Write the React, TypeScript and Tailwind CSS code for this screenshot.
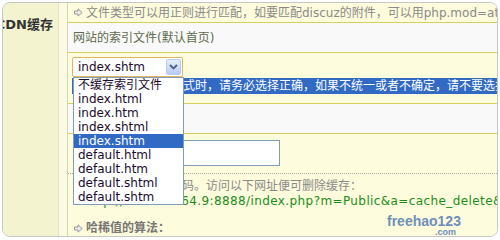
const FONT = "font-['DejaVu_Sans','Noto_Sans_CJK_SC',sans-serif]";

function Arrow() {
  return (
    <svg width="9" height="9" viewBox="0 0 9 9" className="shrink-0">
      <path
        d="M0.5 3h3.5V0.9L8.2 4.5 4 8.1V6H0.5z"
        fill="#ececec"
        stroke="#9a9a9a"
        strokeWidth="1"
      />
    </svg>
  );
}

const OPTIONS = [
  "不缓存索引文件",
  "index.html",
  "index.htm",
  "index.shtml",
  "index.shtm",
  "default.html",
  "default.htm",
  "default.shtml",
  "default.shtm",
];

function Select() {
  return (
    <div className="relative h-[20px] w-[111px]">
      <div className="flex h-full items-center justify-between rounded-[2px] border border-[#e2b45e] bg-white pl-[5px] pr-[1px]">
        <span className="text-[12px] leading-none text-[#1c0a2e]">index.shtm</span>
        <span className="flex h-[16px] w-[15px] items-center justify-center rounded-[2px] border border-[#b8cbf0] bg-gradient-to-b from-[#e6eefd] to-[#b7cbf5]">
          <svg width="9" height="6" viewBox="0 0 9 6">
            <path d="M1 1l3.5 3.5L8 1" fill="none" stroke="#4d6185" strokeWidth="1.8" />
          </svg>
        </span>
      </div>

      {/* open option list */}
      <ul className="absolute left-[1px] top-[20px] z-10 w-[111px] border border-[#7f9db9] bg-white">
        {OPTIONS.map((o) => (
          <li
            key={o}
            className={`h-[14px] pl-[4px] text-[12px] leading-[14px] ${
              o === "index.shtm" ? "bg-[#316ac5] text-white" : "text-[#1c0a2e]"
            }`}
          >
            {o}
          </li>
        ))}
      </ul>
    </div>
  );
}

export default function App() {
  return (
    <div className={`h-[240px] w-[500px] bg-white p-[2px] ${FONT}`}>
      <div className="flex h-[235px] overflow-hidden rounded-[8px] border border-[#c6c6c6]">
        {/* label cell */}
        <div className="flex w-[56px] shrink-0 justify-end border-r border-[#e4e4c4] bg-[#f3f3cf] pr-[5px] pt-[14px]">
          <span className="whitespace-nowrap text-[13px] font-bold leading-[16px] text-[#333]">
            CDN缓存
          </span>
        </div>
        <div className="w-[9px] shrink-0 border-r border-[#d4d4b8] bg-[#fbfbe2]" />

        {/* rows */}
        <div className="relative flex min-w-0 flex-1 flex-col bg-[#fdfcdc]">
          <div className="flex h-[20px] items-center gap-[3px] whitespace-nowrap border-b border-[#d6cf5c] pl-[6px] text-[12px] text-[#8a8a8a]">
            <Arrow />
            <span>文件类型可以用正则进行匹配，如要匹配discuz的附件，可以用php.mod=attachment</span>
          </div>

          <div className="flex h-[30px] items-center border-b border-[#d6cf5c] bg-[#f9f9f9] pl-[5px] text-[12px] text-[#5d6a4c]">
            网站的索引文件(默认首页)
          </div>

          <div className="flex h-[51px] flex-col border-b border-[#d6cf5c] pl-[4px] pt-[4px]">
            <Select />
            <div className="mt-[1px] h-[16px] whitespace-nowrap bg-[#316ac5] pl-[3px] text-[12px] leading-[16px] text-white">
              索引文件不是统一格式时，请务必选择正确，如果不统一或者不确定，请不要选择此项
            </div>
          </div>

          <div className="h-[30px] border-b border-[#d6cf5c] bg-[#f9f9f9]" />

          <div className="h-[40px] border-b border-dotted border-[#a8a8a8] pl-[5px] pt-[6px]">
            <div className="h-[26px] w-[207px] border border-[#7f9db9] bg-white" />
          </div>

          <div className="flex flex-col whitespace-nowrap pl-[6px] pt-[5px] text-[12px] leading-[15px]">
            <span className="text-[#8a8a8a]">缓存清除时使用的密码。访问以下网址便可删除缓存：</span>
            <span className="pl-[11px] tracking-[0.4px] text-[#1b8c1b]">
              http://10.204.164.9:8888/index.php?m=Public&amp;a=cache_delete&amp;key=
            </span>
            <span className="mt-[12px] flex items-center gap-[3px] font-bold text-[#777]">
              <Arrow />
              哈稀值的算法：
            </span>
          </div>

          {/* watermark */}
          <div className="absolute left-[319px] top-[211px] flex flex-col items-end font-['Liberation_Sans',sans-serif] leading-none text-[#4a72b4] opacity-80">
            <span className="text-[14px] font-bold">freehao123</span>
            <span className="mr-[5px] text-[9px] font-bold">.com</span>
          </div>
        </div>
      </div>
    </div>
  );
}
